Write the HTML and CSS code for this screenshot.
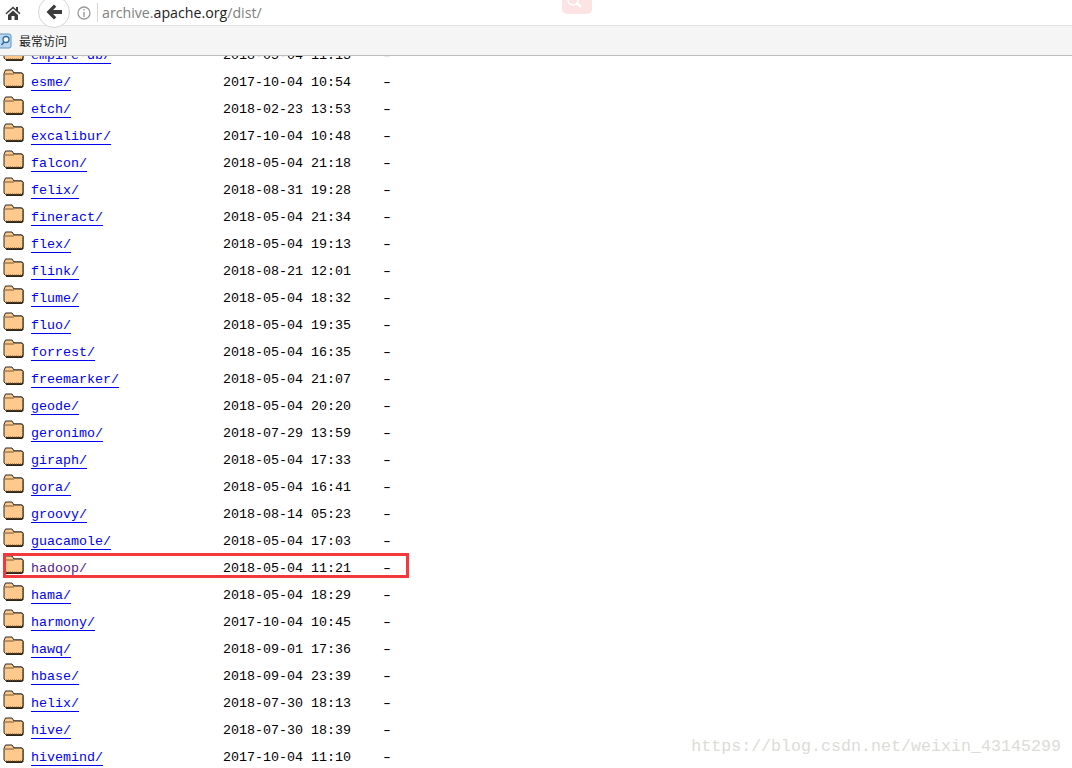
FILE: index.html
```html
<!DOCTYPE html>
<html lang="en">
<head>
<meta charset="utf-8">
<title>Index of /dist</title>
<link rel="stylesheet" href="styles.css">
</head>
<body>
<svg class="defs" width="0" height="0" aria-hidden="true">
  <symbol id="folder" viewBox="0 0 21 20">
    <path d="M3 19h16l1.500-1.500V5l-1.500-1.500H2z" fill="#2e2413"/>
    <path d="M1 4.500 2.500 1H9l2 3h7.500L20 5.500V16L18.500 17.500H2.500L1 16z" fill="#fdc98d" stroke="#2b2b2b"/>
    <path d="M1.500 5H11" fill="none" stroke="#7a5a30"/>
    <path d="M3 17h16M19.500 7v10" stroke="#8a5a20" stroke-dasharray="1 1"/>
  </symbol>
</svg>
<header class="toolbar">
  <svg class="home" viewBox="0 0 16 16" width="16" height="16"><path d="M8 1.500 0.500 8.300l1 1L8 3.500l6.500 5.800 1-1L13 6V2h-2v2.200zM3 10v5h3.500v-4h3v4H13v-5L8 5.500z" fill="#3c3c3c"/></svg>
  <span class="back"><svg viewBox="0 0 18 18" width="18" height="18"><path d="M9 1.500 1.500 9 9 16.500l2.300-2.200L8 11h9V7H8l3.300-3.300z" fill="#3c3c3c"/></svg></span>
  <svg class="info" viewBox="0 0 14 14" width="14" height="14"><circle cx="7" cy="7" r="6" fill="none" stroke="#9a9a9a" stroke-width="1.300"/><path d="M6.300 3h1.400v1.500H6.300zM6.300 6h1.400v5H6.300z" fill="#9a9a9a"/></svg>
  <span class="divider"></span>
  <span class="url">archive.<b class="domain">apache.org</b>/dist/</span>
</header>
<nav class="bookmarks">
  <svg class="bm-icon" viewBox="0 0 13 16" width="13" height="16"><rect x="-3" y="1" width="14" height="14" rx="2" fill="#bcd8ef" stroke="#5c93c4"/><circle cx="6" cy="6.500" r="3" fill="#fff" stroke="#2d6ca8" stroke-width="1.300"/><path d="M4 9 1.500 12" stroke="#2d6ca8" stroke-width="1.600"/></svg>
  <span class="bm-label">最常访问</span>
</nav>
<main class="listing">
  <ul class="rows">
    <li class="row"><svg class="folder"><use href="#folder"/></svg><a class="name" href="#">empire-db/</a><span class="date">2018-05-04 11:13</span><span class="size">-</span></li>
    <li class="row"><svg class="folder"><use href="#folder"/></svg><a class="name" href="#">esme/</a><span class="date">2017-10-04 10:54</span><span class="size">-</span></li>
    <li class="row"><svg class="folder"><use href="#folder"/></svg><a class="name" href="#">etch/</a><span class="date">2018-02-23 13:53</span><span class="size">-</span></li>
    <li class="row"><svg class="folder"><use href="#folder"/></svg><a class="name" href="#">excalibur/</a><span class="date">2017-10-04 10:48</span><span class="size">-</span></li>
    <li class="row"><svg class="folder"><use href="#folder"/></svg><a class="name" href="#">falcon/</a><span class="date">2018-05-04 21:18</span><span class="size">-</span></li>
    <li class="row"><svg class="folder"><use href="#folder"/></svg><a class="name" href="#">felix/</a><span class="date">2018-08-31 19:28</span><span class="size">-</span></li>
    <li class="row"><svg class="folder"><use href="#folder"/></svg><a class="name" href="#">fineract/</a><span class="date">2018-05-04 21:34</span><span class="size">-</span></li>
    <li class="row"><svg class="folder"><use href="#folder"/></svg><a class="name" href="#">flex/</a><span class="date">2018-05-04 19:13</span><span class="size">-</span></li>
    <li class="row"><svg class="folder"><use href="#folder"/></svg><a class="name" href="#">flink/</a><span class="date">2018-08-21 12:01</span><span class="size">-</span></li>
    <li class="row"><svg class="folder"><use href="#folder"/></svg><a class="name" href="#">flume/</a><span class="date">2018-05-04 18:32</span><span class="size">-</span></li>
    <li class="row"><svg class="folder"><use href="#folder"/></svg><a class="name" href="#">fluo/</a><span class="date">2018-05-04 19:35</span><span class="size">-</span></li>
    <li class="row"><svg class="folder"><use href="#folder"/></svg><a class="name" href="#">forrest/</a><span class="date">2018-05-04 16:35</span><span class="size">-</span></li>
    <li class="row"><svg class="folder"><use href="#folder"/></svg><a class="name" href="#">freemarker/</a><span class="date">2018-05-04 21:07</span><span class="size">-</span></li>
    <li class="row"><svg class="folder"><use href="#folder"/></svg><a class="name" href="#">geode/</a><span class="date">2018-05-04 20:20</span><span class="size">-</span></li>
    <li class="row"><svg class="folder"><use href="#folder"/></svg><a class="name" href="#">geronimo/</a><span class="date">2018-07-29 13:59</span><span class="size">-</span></li>
    <li class="row"><svg class="folder"><use href="#folder"/></svg><a class="name" href="#">giraph/</a><span class="date">2018-05-04 17:33</span><span class="size">-</span></li>
    <li class="row"><svg class="folder"><use href="#folder"/></svg><a class="name" href="#">gora/</a><span class="date">2018-05-04 16:41</span><span class="size">-</span></li>
    <li class="row"><svg class="folder"><use href="#folder"/></svg><a class="name" href="#">groovy/</a><span class="date">2018-08-14 05:23</span><span class="size">-</span></li>
    <li class="row"><svg class="folder"><use href="#folder"/></svg><a class="name" href="#">guacamole/</a><span class="date">2018-05-04 17:03</span><span class="size">-</span></li>
    <li class="row"><svg class="folder"><use href="#folder"/></svg><a class="name visited" href="#">hadoop/</a><span class="date">2018-05-04 11:21</span><span class="size">-</span></li>
    <li class="row"><svg class="folder"><use href="#folder"/></svg><a class="name" href="#">hama/</a><span class="date">2018-05-04 18:29</span><span class="size">-</span></li>
    <li class="row"><svg class="folder"><use href="#folder"/></svg><a class="name" href="#">harmony/</a><span class="date">2017-10-04 10:45</span><span class="size">-</span></li>
    <li class="row"><svg class="folder"><use href="#folder"/></svg><a class="name" href="#">hawq/</a><span class="date">2018-09-01 17:36</span><span class="size">-</span></li>
    <li class="row"><svg class="folder"><use href="#folder"/></svg><a class="name" href="#">hbase/</a><span class="date">2018-09-04 23:39</span><span class="size">-</span></li>
    <li class="row"><svg class="folder"><use href="#folder"/></svg><a class="name" href="#">helix/</a><span class="date">2018-07-30 18:13</span><span class="size">-</span></li>
    <li class="row"><svg class="folder"><use href="#folder"/></svg><a class="name" href="#">hive/</a><span class="date">2018-07-30 18:39</span><span class="size">-</span></li>
    <li class="row"><svg class="folder"><use href="#folder"/></svg><a class="name" href="#">hivemind/</a><span class="date">2017-10-04 11:10</span><span class="size">-</span></li>
  </ul>
</main>
<div class="share-badge"><svg viewBox="0 0 30 14" width="30" height="14"><circle cx="11" cy="0" r="5" fill="none" stroke="#fff" stroke-width="1.500"/><path d="M15 3l4 4" stroke="#fff" stroke-width="2.500"/></svg></div>
<div class="highlight"></div>
<div class="watermark">https://blog.csdn.net/weixin_43145299</div>
</body>
</html>
```
FILE: styles.css
```css
* { box-sizing: border-box; }
html, body { margin: 0; padding: 0; }
body {
  width: 1072px;
  height: 768px;
  overflow: hidden;
  background: #fff;
  position: relative;
  display: flex;
  flex-direction: column;
  font-family: "Liberation Mono", monospace;
}
.defs { position: absolute; }

.toolbar {
  height: 26px;
  flex: none;
  display: flex;
  align-items: center;
  background: #fff;
  border-bottom: 1px solid #e2e2e2;
  padding-left: 5px;
}
.home { flex: none; }
.back {
  position: relative;
  z-index: 1;
  flex: none;
  width: 32px;
  height: 32px;
  margin: -2px 0 0 17px;
  border: 1px solid #d4d4d4;
  border-radius: 50%;
  background: #fff;
  display: flex;
  align-items: center;
  justify-content: center;
}
.info { flex: none; margin: 0 0 0 7px; }
.divider { flex: none; width: 1px; height: 19px; background: #d5d5d5; margin: 0 0 0 6px; }
.url {
  margin: 0 0 0 4px;
  font: 14.200px "Open Sans", "Liberation Sans", sans-serif;
  color: #7f7f7f;
  white-space: nowrap;
}
.domain { font-weight: 400; color: #222; }

.bookmarks {
  height: 30px;
  flex: none;
  display: flex;
  align-items: center;
  gap: 6px;
  background: #f5f5f5;
  border-bottom: 1px solid #bdbdbd;
}
.bm-icon { flex: none; }
.bm-label {
  font: 12px "Noto Sans CJK SC", sans-serif;
  color: #1a1a1a;
}

.listing { flex: 1; min-height: 0; overflow: hidden; }
.rows { list-style: none; margin: -13px 0 0; padding: 0; }
.row {
  height: 27px;
  display: grid;
  grid-template-columns: 28px 192px 160px auto;
  align-items: start;
  font-size: 13.333px;
  line-height: 15px;
  color: #000;
  padding: 5px 0 0 3px;
}
.folder { width: 21px; height: 20px; margin-top: -6px; }
.name {
  justify-self: start;
  color: #0000ee;
  text-decoration: underline;
  text-underline-offset: 4px;
  text-decoration-thickness: 1px;
}
.date { white-space: nowrap; }
.size { justify-self: start; transform: scaleX(1.5); }
.visited { color: #551a8b; }

.share-badge {
  position: absolute;
  left: 562px;
  top: 0;
  width: 30px;
  height: 14px;
  background: #fde3e3;
  border-radius: 0 0 5px 5px;
  overflow: hidden;
}
.highlight {
  position: absolute;
  left: 3px;
  top: 553px;
  width: 406px;
  height: 25px;
  border: 3px solid #f5383c;
}
.watermark {
  position: absolute;
  right: 11px;
  top: 737px;
  font: 16.667px "Liberation Mono", monospace;
  color: #dcdcd6;
  white-space: nowrap;
}
```
